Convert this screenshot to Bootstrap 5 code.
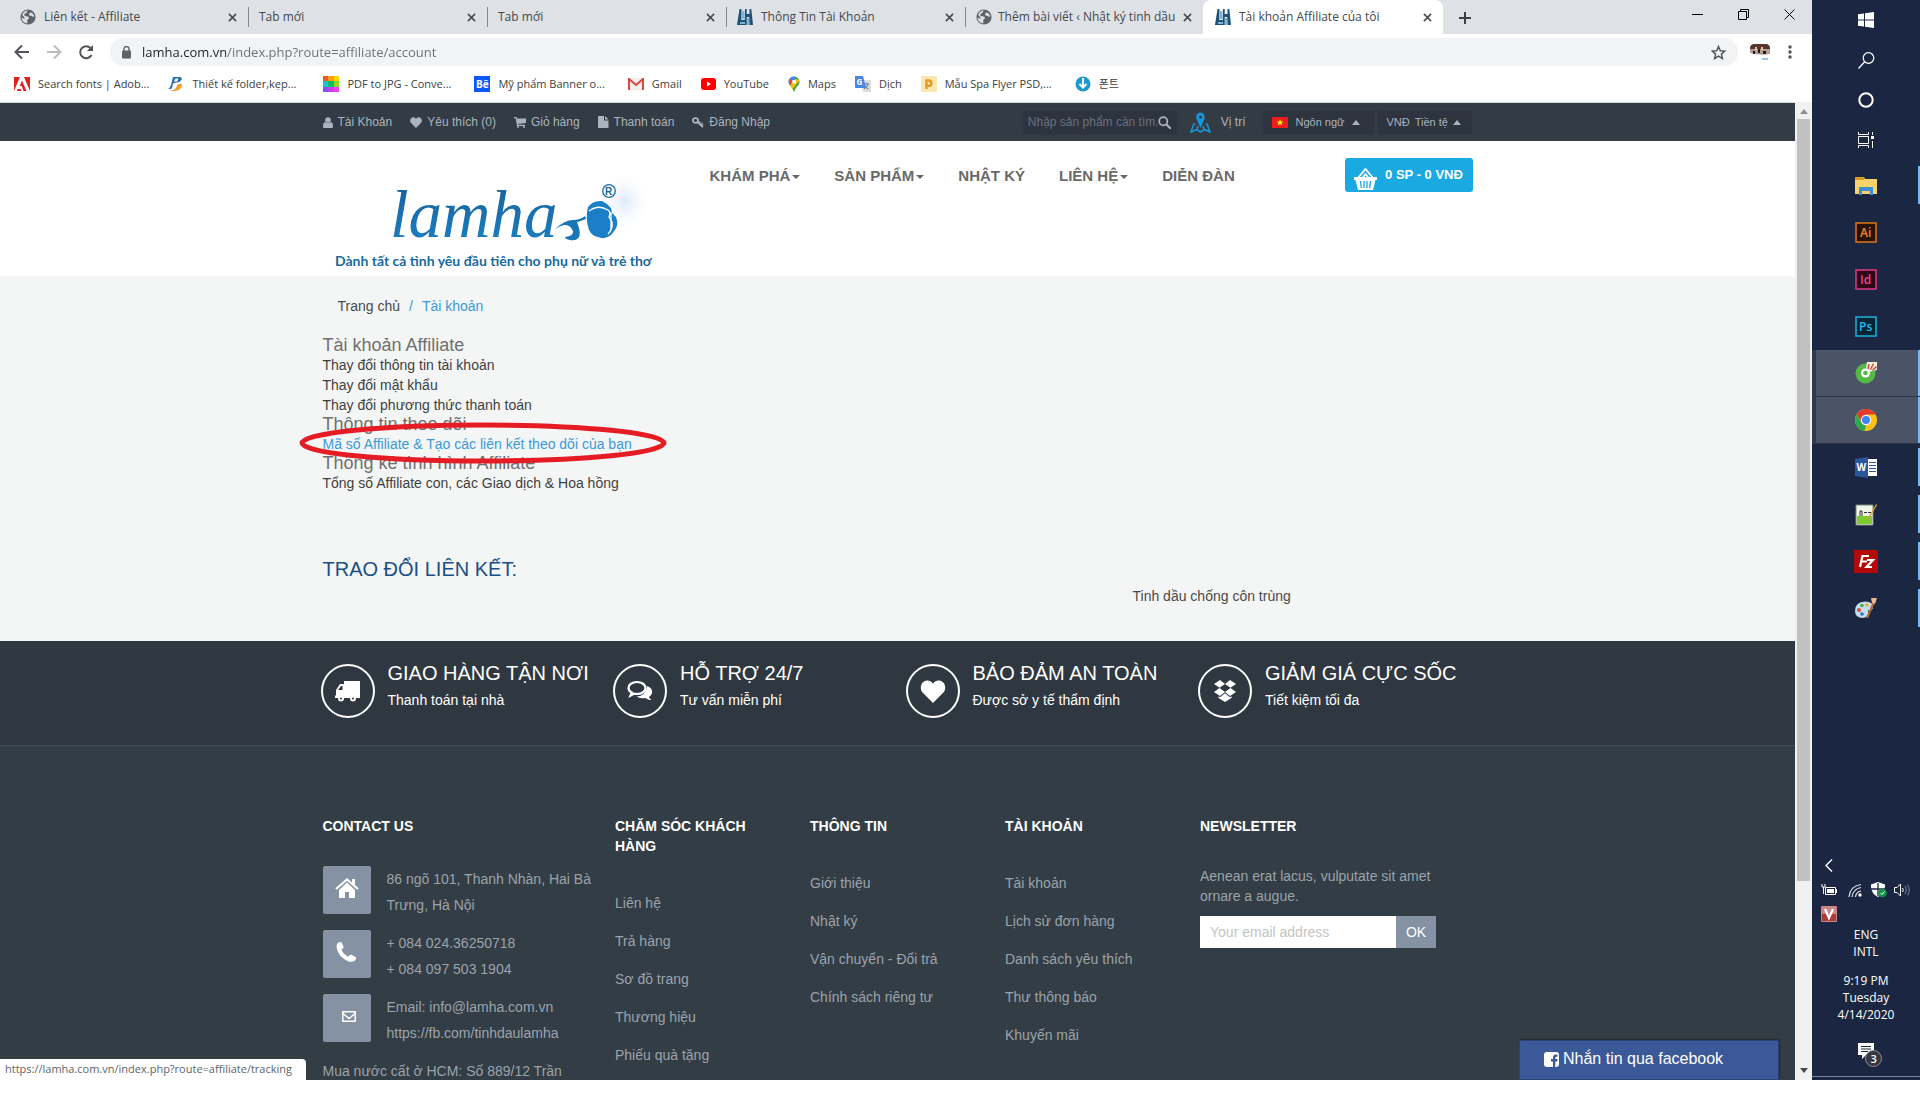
<!DOCTYPE html>
<html lang="vi">
<head>
<meta charset="utf-8">
<meta name="viewport" content="width=device-width, initial-scale=1">
<title>Tài khoản Affiliate của tôi</title>
<link href="https://cdn.jsdelivr.net/npm/bootstrap@5.3.0/dist/css/bootstrap.min.css" rel="stylesheet">
<style>
body{background:#fff;height:100vh;overflow:hidden;padding-bottom:20px;font-family:"Liberation Sans",Arial,sans-serif;font-size:14px;line-height:20px;color:#4a4a4a}
a{text-decoration:none;color:inherit}
button{font-family:inherit}
svg{display:block;flex:none}
.chrome-ui,.win-bar{font-family:"Open Sans","Noto Sans","Noto Sans CJK KR",sans-serif;font-size:12px;line-height:16px}
.plain-btn{background:none;border:0;padding:0;color:inherit;display:flex;align-items:center;justify-content:center}

/* browser tabs */
.tab-strip{background:#dee1e6;height:34px;color:#45494d}
.b-tab{width:239px;height:34px;padding:0 11px 0 10px;gap:8px;position:relative}
.b-tab .tab-label{flex:1;white-space:nowrap}
.b-tab.sep{border-right:1px solid #85898e;height:20px;margin:7px 0}
.b-tab.first{width:249px;padding-left:20px}
.b-tab.last-sep{width:237px;gap:6px;border:0}
.b-tab.live{width:240px;background:#fff;border-radius:8px 8px 0 0;padding:0 11px 0 12px}
.tab-strip .new-tab{width:44px;height:28px}
.win-btn{width:46px;height:28px;color:#000}
.tool-row{height:28px;margin-top:4px;padding:0 14px}
.omni{background:#f1f3f4;border-radius:14px;height:28px;padding:0 12px 0 12px}
.omni input{border:0;outline:0;padding:0;font-size:13px;line-height:24px;height:28px;margin-left:11px;flex:1;color:transparent;background:linear-gradient(90deg,#202124 84px,#6b7075 84px);-webkit-background-clip:text;background-clip:text}
.mark-row{height:36px;padding-left:14px;gap:19px;color:#3c4043;white-space:nowrap;font-size:11px}
.mark-row a{display:flex;align-items:center;gap:8px}

/* site */
.site{border-top:1px solid #d5d8db;background:#f4f5f5}
.wrap{width:100%;max-width:1180px;margin:0 auto;padding:0 15px}
.top-line{background:#333c44;color:#abb3be;font-size:12px;line-height:16px;height:38px}
.top-links{gap:18px}
.top-links a{display:flex;align-items:center;gap:5px}
.dark-box{background:#2d3440;border:1px solid #323945;border-radius:3px;height:25px;color:#abb3be;font-size:11px}
.find-box{width:156px;padding:0 7px 0 5px}
.find-box input{background:none;border:0;outline:0;padding:0;width:130px;height:23px;font-size:12px;color:#abb3be}
.find-box input::placeholder{color:#69707b;opacity:1}
.up-caret{border:4px solid transparent;border-top:0;border-bottom:5px solid #abb3be}
.down-caret{display:inline-block;border:4px solid transparent;border-bottom:0;border-top-color:#696969;margin-left:2px;vertical-align:middle}
.site-head{background:#fff;height:135px}
.logo-box{width:370px}
.main-nav{padding-top:25px;font-size:15px;font-weight:700;color:#696969}
.main-nav a{padding:0 17px}
.cart-btn{background:#1ba9e1;color:#fff;border:0;border-radius:3px;height:34px;width:128px;margin-top:17px;font-size:13px;font-weight:700;gap:8px}
.crumbs{padding:20px 15px 20px;gap:9px}
.hot{color:#3a9ad9}
.acct h2{font-size:18px;line-height:19px;font-weight:400;color:#707070;margin:0}
.acct ul{margin:0;padding:0;list-style:none;color:#3f3f3f}
.ring-host{position:relative;display:inline-block}
.ring{position:absolute;left:-24px;top:-12px;z-index:2;pointer-events:none}
.swap{margin-top:65px;font-size:20px;line-height:22px;color:#1c4f86;margin-bottom:6px}
.ticker{padding-left:810px;padding-bottom:35px}
.features{background:#2f3840;border-bottom:1px solid #434d54;color:#fff;height:105px}
.bleed{margin:0 -5px 0 -15px}
.features .bleed{padding-top:22px}
.features .col-3{padding:0 0 0 13px;display:flex;gap:13px}
.disc{width:54px;height:54px;border:2px solid #fff;border-radius:50%;display:flex;align-items:center;justify-content:center;flex:none;margin-top:1px}
.features h3{font-size:20px;line-height:20px;font-weight:400;margin:0 0 9px}
.features p{margin:0;line-height:16px}
.foot{background:#333d45;color:#9ba3ab;padding-top:70px}
.foot h4{font-size:14px;line-height:20px;font-weight:700;color:#fff;margin:0}
.foot .bleed>div{padding:0 15px}
.foot ul{list-style:none;margin:28px 0 0;padding:0}
.foot li{line-height:20px;padding:9px 0}
.foot-text{margin:30px 0 10px}
.contacts{margin-top:30px;white-space:nowrap}
.contact-row{display:flex;gap:16px;margin-bottom:12px;line-height:26px;height:52px}
.addr-line{line-height:26px}
.tile{width:48px;height:48px;border-radius:2px;background:#8492a4;display:flex;align-items:center;justify-content:center;flex:none}
.mail-in{width:196px;height:32px;border:0;border-radius:0;padding:0 10px;font-size:14px;background:#fff}
.mail-in::placeholder{color:#c4c4c4;opacity:1}
.mail-ok{width:40px;height:32px;border:0;background:#8492a4;color:#fff;font-size:14px}
.status-tip{position:absolute;left:0;bottom:0;background:#fff;border-radius:0 4px 0 0;height:21px;padding:2px 14px 0 5px;color:#606468}
.status-tip.chrome-ui{font-size:11px}
.fb-chat{position:absolute;right:16px;bottom:0;width:260px;height:40px;background:#3b5998;border:1px solid #2d4373;border-radius:2px 2px 0 0;box-shadow:1px -1px 2px #0005;color:#fff;font-size:16px;padding:0 0 2px 24px;gap:4px}
.scroll{width:17px;background:#f1f1f1;padding:7px 2px 7px}
.scroll .thumb{background:#c1c1c1;flex:0 0 79%;width:13px;margin-top:5px}
.scroll .thumb+svg{margin-top:auto}

/* taskbar */
.win-bar{width:108px;background:#1b2742;color:#fff;flex:none}
.sys-btn{height:40px;flex:none}
.apps{margin-top:2px;flex:none}
.apps button{height:47px;width:108px;position:relative}
.apps button.run::after{content:"";position:absolute;right:0;top:4px;bottom:5px;width:2px;background:#76b9ed}
.apps button.on{background:#4b5466;border-left:4px solid #2f3a50;border-bottom:1px solid #2a354c;padding-right:4px}
.apps button.on::after{top:0;bottom:0}
.clock{text-align:center;line-height:17px}
.tray{gap:7px;padding-left:9px;height:20px}
.note-line{border-top:1px solid #7b849a;height:4px}
</style>
</head>
<body>
<svg width="0" height="0" class="position-absolute">
<defs>
<symbol id="globe" viewBox="0 0 16 16"><circle cx="8" cy="8" r="7.6" fill="#5f6368"/><path d="M8 1.6c-1.400 1-.6 2.200-2.600 2.800S4 7 6.200 7.200s3 .6 2.600 2-2 1.200-1.600 2.800l.2 2.200C4 14.200 1.500 11.500 1.500 8.200l3 2-.2-2L2.200 6C3 3.200 5.200 1.600 8 1.600zM10.200 3.200c2 .6 3.600 2.200 4.100 4.400-1.300.6-2-.4-3-.8s-2.300-.2-2.300-1.600 1.600-.8 1.200-2z" fill="#dee1e6"/></symbol>
<symbol id="lh" viewBox="0 0 16 16"><path d="M2.500 0h2L4.300 11h3.500L8 0h1.700v5h2.800V0h1.800L16 16h-3.500l-.3-8H9.700v8H0z" fill="#1f5076"/><path d="M5 2h2.500v8H5zM10 9h2v7h-2zM3 13h5v2H3z" fill="#7eb4d8"/></symbol>
<symbol id="cross" viewBox="0 0 10 10"><path d="M1 1l8 8M9 1L1 9" stroke="currentColor" stroke-width="1.700" fill="none"/></symbol>
<symbol id="heart" viewBox="0 0 16 15"><path d="M8 15L1.200 8.200C-.6 6.200-.2 2.800 1.700 1.300 3.800-.3 6.600.3 8 2.500c1.400-2.200 4.200-2.800 6.300-1.200 1.900 1.500 2.300 4.900.5 6.900z" fill="currentColor"/></symbol>
<symbol id="mag" viewBox="0 0 16 16"><circle cx="6.500" cy="6.500" r="5" stroke="currentColor" stroke-width="2.200" fill="none"/><path d="M10.500 10.500L15 15" stroke="currentColor" stroke-width="2.600" stroke-linecap="round"/></symbol>
</defs>
</svg>
<div class="d-flex h-100">
<div class="flex-grow-1 d-flex flex-column" style="min-width:0">

<header class="chrome-ui">
<div class="tab-strip d-flex">
<div class="b-tab sep first d-flex align-items-center"><svg width="16" height="16"><use href="#globe"/></svg><span class="tab-label">Liên kết - Affiliate</span><button class="plain-btn" aria-label="Đóng"><svg width="9" height="9"><use href="#cross"/></svg></button></div>
<div class="b-tab sep d-flex align-items-center"><span class="tab-label">Tab mới</span><button class="plain-btn" aria-label="Đóng"><svg width="9" height="9"><use href="#cross"/></svg></button></div>
<div class="b-tab sep d-flex align-items-center"><span class="tab-label">Tab mới</span><button class="plain-btn" aria-label="Đóng"><svg width="9" height="9"><use href="#cross"/></svg></button></div>
<div class="b-tab sep d-flex align-items-center"><svg width="16" height="16"><use href="#lh"/></svg><span class="tab-label">Thông Tin Tài Khoản</span><button class="plain-btn" aria-label="Đóng"><svg width="9" height="9"><use href="#cross"/></svg></button></div>
<div class="b-tab sep last-sep d-flex align-items-center"><svg width="16" height="16"><use href="#globe"/></svg><span class="tab-label">Thêm bài viết ‹ Nhật ký tinh dầu</span><button class="plain-btn" aria-label="Đóng"><svg width="9" height="9"><use href="#cross"/></svg></button></div>
<div class="b-tab live d-flex align-items-center"><svg width="16" height="16"><use href="#lh"/></svg><span class="tab-label">Tài khoản Affiliate của tôi</span><button class="plain-btn" aria-label="Đóng"><svg width="9" height="9"><use href="#cross"/></svg></button></div>
<button class="plain-btn new-tab mt-1" aria-label="Thẻ mới"><svg width="12" height="12" viewBox="0 0 12 12"><path d="M6 0v12M0 6h12" stroke="#3c4043" stroke-width="2"/></svg></button>
<div class="ms-auto d-flex">
<button class="plain-btn win-btn" aria-label="Thu nhỏ"><svg width="11" height="11"><path d="M0 5.500h11" stroke="#000"/></svg></button>
<button class="plain-btn win-btn" aria-label="Khôi phục"><svg width="11" height="11"><path d="M.5 2.500h8v8h-8zM2.500 2.500v-2h8v8h-2" stroke="#000" fill="none"/></svg></button>
<button class="plain-btn win-btn" aria-label="Đóng cửa sổ"><svg width="11" height="11"><path d="M.5.5l10 10M10.500.5l-10 10" stroke="#000" fill="none"/></svg></button>
</div>
</div>
<div class="tool-row d-flex align-items-center">
<button class="plain-btn" aria-label="Quay lại"><svg width="16" height="16" viewBox="0 0 16 16"><path d="M15 8H2M8 1.500L1.500 8 8 14.500" stroke="#505357" stroke-width="2" fill="none"/></svg></button>
<button class="plain-btn ms-3" aria-label="Tiến"><svg width="16" height="16" viewBox="0 0 16 16"><path d="M1 8h13M8 1.500L14.500 8 8 14.500" stroke="#babcbe" stroke-width="2" fill="none"/></svg></button>
<button class="plain-btn ms-3 me-3" aria-label="Tải lại"><svg width="16" height="16" viewBox="0 0 16 16"><path d="M13.500 11A6 6 0 1 1 12.500 4" stroke="#505357" stroke-width="2" fill="none"/><path d="M15 1v6H9z" fill="#505357"/></svg></button>
<div class="omni d-flex align-items-center flex-grow-1 me-2">
<svg width="9" height="13" viewBox="0 0 9 13"><rect y="4.500" width="9" height="8" rx="1" fill="#5f6368"/><path d="M2 5V3a2.500 2.500 0 0 1 5 0v2" stroke="#5f6368" stroke-width="1.400" fill="none"/></svg>
<label class="visually-hidden" for="url">Địa chỉ</label><input id="url" value="lamha.com.vn/index.php?route=affiliate/account">
<button class="plain-btn" aria-label="Đánh dấu trang"><svg width="15" height="15" viewBox="0 0 16 16"><path d="M8 1.500l1.900 4.600 4.900.4-3.700 3.200 1.100 4.800L8 11.900l-4.200 2.600 1.100-4.800L1.200 6.500l4.900-.4z" stroke="#505357" stroke-width="1.500" fill="none"/></svg></button>
</div>
<button class="plain-btn ms-1" aria-label="Hồ sơ"><svg width="20" height="20" viewBox="0 0 20 20"><path d="M0 11V6q0-4 5-4h10q5 0 5 4v6q-10 2-20-1z" fill="#b39c92"/><path d="M0 7q0-5 5-5h10q5 0 5 5z" fill="#54362e"/><path d="M3 9h2v3H3zM8 7h2v4H8zM13 9h3v3h-3z" fill="#241a1a"/><path d="M5 5h2v3H5zM11 5h2v3h-2z" fill="#e8c3b0"/><path d="M12 16.500h6v1h-6z" fill="#2e8fe0"/></svg></button>
<button class="plain-btn ms-3 me-1" aria-label="Menu"><svg width="8" height="14"><g fill="#505357"><circle cx="4" cy="2" r="1.700"/><circle cx="4" cy="7" r="1.700"/><circle cx="4" cy="12" r="1.700"/></g></svg></button>
</div>
<nav class="mark-row d-flex align-items-center">
<a href="#"><svg width="16" height="14"><path d="M0 0h16v14H0z" fill="#d9241f"/><path d="M6 0h4l6 14h-3.500L8 3.500 5.800 9h2l1.700 5H7.600l-1-2H3.700L3 14H0z" fill="#fff"/></svg>Search fonts | Adob...</a>
<a href="#"><svg width="16" height="16" viewBox="0 0 16 16"><path d="M5 1h7c3 0 2 4-1 5-2 1-5 0-6 2-1 2 0 4-2 5H0q2-1 3-4z" fill="#2a6fb5"/><path d="M7.500 2.500h3l-1.500 3h-3z" fill="#fff"/><path d="M1 15q8-1 8-6 3-2 5-1 0 7-8 7z" fill="#f2a02b"/></svg>Thiết kế folder,kẹp...</a>
<a href="#" class="ms-2"><svg width="16" height="16"><path d="M0 0h6v5H0z" fill="#f1592a"/><path d="M5 0h6v5H5z" fill="#fb9f1a"/><path d="M11 0h5v5h-5z" fill="#ffd400"/><path d="M0 5h5v6H0z" fill="#18c6d8"/><path d="M5 5h6v6H5z" fill="#10ba60"/><path d="M11 5h5v6h-5z" fill="#8bdc20"/><path d="M0 11h5v5H0z" fill="#7a55f5"/><path d="M5 11h6v5H5z" fill="#c83df0"/><path d="M11 11h5v5h-5z" fill="#ef3df0"/></svg>PDF to JPG - Conve...</a>
<a href="#" class="ms-1"><svg width="16" height="16"><path d="M0 0h16v16H0z" fill="#0a58ff"/><text x="2" y="12" font-size="10" font-weight="700" fill="#fff">Bē</text></svg>Mỹ phẩm Banner o...</a>
<a href="#" class="ms-1"><svg width="16" height="12"><path d="M0 0h16v12H0z" fill="#f2eeee"/><path d="M1 12V1l7 6 7-6v11" stroke="#d5483c" stroke-width="2" fill="none"/></svg>Gmail</a>
<a href="#"><svg width="15" height="12"><rect width="15" height="12" rx="3" fill="#f00"/><path d="M6 3.500v5L10 6z" fill="#fff"/></svg>YouTube</a>
<a href="#"><svg width="12" height="16" viewBox="0 0 12 16"><path d="M6 16C5 11 1 10 .6 6A5.400 5.400 0 0 1 6 .5 5.400 5.400 0 0 1 11.400 6C11 10 7 11 6 16z" fill="#34a853"/><path d="M.6 6A5.400 5.400 0 0 1 6 .5L8 1 2 9Q.8 7.500.6 6z" fill="#4285f4"/><path d="M2 3L.7 6 2 9l3-4z" fill="#ea4335"/><path d="M2 9.200l6-6.500 3 1.600Q12 8 8.500 11l-3.500 3z" fill="#fbbc04"/><path d="M11.400 6Q11 9 8.500 11 6.500 13 6 16q-.5-2-1.200-3.200L11 5z" fill="#34a853"/><circle cx="6" cy="5.800" r="2" fill="#fff"/></svg>Maps</a>
<a href="#"><svg width="16" height="16"><path d="M5 4h11v12H8z" fill="#dadce0"/><path d="M8 8h6M11 7v1M13 8q-1 4-4 5M9.500 9q1 3 4 4" stroke="#617d8b" fill="none"/><path d="M0 0h8l3 12H1q-1 0-1-1z" fill="#4a86e8"/><text x="1.500" y="9" font-size="8" font-weight="700" fill="#fff">G</text></svg>Dịch</a>
<a href="#"><svg width="16" height="16"><path d="M0 0h16v16H0z" fill="#fbe7b0"/><path d="M5.500 13V4.500h2.200a2.700 2.700 0 0 1 0 5.400H6" stroke="#ef9420" stroke-width="2.400" fill="none"/></svg>Mẫu Spa Flyer PSD,...</a>
<a href="#" class="ms-1"><svg width="16" height="16"><circle cx="8" cy="8" r="7.500" fill="#1a9ad0"/><path d="M8 2v9M4.500 8L8 11.500 11.500 8" stroke="#fff" stroke-width="2" fill="none"/></svg>폰트</a>
</nav>
</header>

<div class="d-flex flex-grow-1 position-relative overflow-hidden" style="min-height:0">
<main class="site flex-grow-1 overflow-hidden position-relative">
<div class="top-line">
<div class="wrap d-flex align-items-center h-100">
<nav class="top-links d-flex">
<a href="#"><svg width="10" height="11" viewBox="0 0 10 11"><circle cx="5" cy="3" r="2.800" fill="currentColor"/><path d="M0 10q0-4.500 2-5 3 2 6 0 2 .5 2 5 0 1-1 1H1q-1 0-1-1z" fill="currentColor"/></svg>Tài Khoản</a>
<a href="#"><svg width="12" height="11"><use href="#heart"/></svg>Yêu thích (0)</a>
<a href="#"><svg width="12" height="11" viewBox="0 0 12 11"><path d="M0 0h2.500L3 1.500h9v4.600L4 7l.1.800H11V9H3L1.700 1.200H0z" fill="currentColor"/><circle cx="4" cy="10" r="1" fill="currentColor"/><circle cx="10" cy="10" r="1" fill="currentColor"/></svg>Giỏ hàng</a>
<a href="#"><svg width="11" height="12" viewBox="0 0 11 12"><path d="M0 0h6v4.500h4.500V12H0zM7 0l3.500 3.500H7z" fill="currentColor"/></svg>Thanh toán</a>
<a href="#"><svg width="12" height="11" viewBox="0 0 12 11"><ellipse cx="3.500" cy="3.500" rx="2.600" ry="2.300" stroke="currentColor" stroke-width="1.800" fill="none"/><path d="M5.500 5l5.500 5M9 8l1.800-1.500M7 6.500L8.500 5" stroke="currentColor" stroke-width="1.800"/></svg>Đăng Nhập</a>
</nav>
<form class="dark-box find-box d-flex align-items-center ms-auto"><label class="visually-hidden" for="q">Tìm</label><input id="q" placeholder="Nhập sản phẩm cần tìm."><button type="button" class="plain-btn" aria-label="Tìm"><svg width="13" height="13"><use href="#mag"/></svg></button></form>
<a href="#" class="d-flex align-items-center ms-2 ps-1 me-3" style="gap:10px"><svg width="21" height="21" viewBox="0 0 21 21"><path d="M5.500 12H3.800L1 20l6-2.500 3.500 2.500 4-2.500L20 20l-3-8h-1.500M7 17l1-3M14 17l-1-3" stroke="#1a94d8" stroke-width="1.600" fill="none"/><path d="M10.500 16L7 8Q4.800 3 8.500 1q4.500-1.500 6 2.500.4 2-.4 4.500z" fill="#1a94d8"/><circle cx="10.500" cy="5" r="1.600" fill="#333c44"/></svg>Vị trí</a>
<button class="dark-box d-flex align-items-center" style="width:113px;padding:0 9px;gap:8px"><svg width="16" height="11"><path d="M0 0h16v11H0z" fill="#ee1c1c"/><path d="M8 2l.9 2.500h2.600L9.400 6l.8 2.600L8 7 5.800 8.600 6.600 6 4.500 4.500h2.600z" fill="#ff0"/></svg>Ngôn ngữ<span class="up-caret"></span></button>
<button class="dark-box d-flex align-items-center" style="width:96px;padding:0 9px;gap:5px;margin-left:2px">VNĐ <span>Tiền tệ</span><span class="up-caret"></span></button>
</div>
</div>

<div class="site-head">
<div class="wrap d-flex align-items-start">
<a href="#" class="logo-box"><svg width="350" height="134" viewBox="0 0 350 134"><defs><radialGradient id="halo"><stop offset="0" stop-color="#cfdff2"/><stop offset="1" stop-color="#fff" stop-opacity="0"/></radialGradient><linearGradient id="ink" x1="0" y1="0" x2="0" y2="1"><stop offset="0" stop-color="#1a5f93"/><stop offset="1" stop-color="#1a82c8"/></linearGradient></defs>
<ellipse cx="302" cy="60" rx="26" ry="30" fill="url(#halo)" opacity=".7"/>
<text x="67" y="96" font-family="Liberation Serif,serif" font-style="italic" font-size="67" fill="url(#ink)">lamha</text>
<path d="M232 88q10-9 18-9 7 0 12-4l1 3q-5 2-9 3 8 20-7 18-5-1-5-3 9-1 8-6-3-7-9-6-4 1-9 4z" fill="#1a75b4"/>
<path d="M265 66q5-7 14-6 6 3 9 7l1 5 4 4q3 7-1 13l-4 5q-6 5-13 2-6-1-9-7-4-12-1-23z" fill="#1a7fc6"/><path d="M266 70q9-7 19-1 3 2 1 7l3 5q1 7-4 12M288 71v18" stroke="#fff" stroke-width="1.300" fill="none"/>
<circle cx="286" cy="50" r="6.300" stroke="#1a6aa4" stroke-width="1.300" fill="#fff"/><text x="282" y="54" font-family="Liberation Sans,sans-serif" font-size="10" font-weight="700" fill="#1a6aa4">R</text>
<text x="12" y="125" font-family="Lato,sans-serif" font-size="14" font-weight="700" fill="#176a9f">Dành tất cả tình yêu đầu tiên cho phụ nữ và trẻ thơ</text></svg></a>
<nav class="main-nav d-flex">
<a href="#">KHÁM PHÁ<span class="down-caret"></span></a><a href="#">SẢN PHẨM<span class="down-caret"></span></a><a href="#">NHẬT KÝ</a><a href="#">LIÊN HỆ<span class="down-caret"></span></a><a href="#">DIỄN ĐÀN</a>
</nav>
<button class="cart-btn ms-auto d-flex align-items-center justify-content-center p-0"><svg width="23" height="22" viewBox="0 0 23 22" class="mt-2"><path d="M4 10L11.500 1 19 10M8.500 10l3-4 3 4" stroke="#fff" stroke-width="1.800" fill="none"/><path d="M0 9h23v3h-1.500L19 22H4L1.500 12H0z" fill="#fff"/><path d="M6.500 13l.8 7M10 13v7M13 13v7M16.500 13l-.8 7" stroke="#1ba9e1" stroke-width="1.300"/></svg>0 SP - 0 VNĐ</button>
</div>
</div>

<div class="wrap">
<nav class="crumbs d-flex"><a href="#">Trang chủ</a><span class="hot">/</span><a href="#" class="hot">Tài khoản</a></nav>
<section class="acct">
<h2>Tài khoản Affiliate</h2>
<ul><li><a href="#">Thay đổi thông tin tài khoản</a></li><li><a href="#">Thay đổi mật khẩu</a></li><li><a href="#">Thay đổi phương thức thanh toán</a></li></ul>
<h2>Thông tin theo dõi</h2>
<ul><li><span class="ring-host"><a href="#" class="hot">Mã số Affiliate &amp; Tạo các liên kết theo dõi của bạn</a><svg class="ring" width="368" height="43"><ellipse cx="184" cy="21" rx="181" ry="18" fill="none" stroke="#e51c24" stroke-width="5"/></svg></span></li></ul>
<h2>Thống kê tình hình Affiliate</h2>
<ul><li><a href="#">Tổng số Affiliate con, các Giao dịch &amp; Hoa hồng</a></li></ul>
</section>
<h3 class="swap fw-normal">TRAO ĐỔI LIÊN KẾT:</h3>
<div class="ticker"><a href="#">Tinh dầu chống côn trùng</a></div>
</div>

<section class="features">
<div class="wrap"><div class="row g-0 bleed">
<div class="col-3"><span class="disc"><svg width="25" height="21" viewBox="0 0 25 21"><path d="M9 0h16v17H9zM7.500 3h2v14H0v-2l1-1V9l4-6z" fill="#fff"/><path d="M3 9l3-4h1.500v4z" fill="#2f3840"/><circle cx="6" cy="17.500" r="2" fill="#2f3840" stroke="#fff" stroke-width="2"/><circle cx="18" cy="17.500" r="2" fill="#2f3840" stroke="#fff" stroke-width="2"/></svg></span><div><h3>GIAO HÀNG TẬN NƠI</h3><p>Thanh toán tại nhà</p></div></div>
<div class="col-3"><span class="disc"><svg width="26" height="22" viewBox="0 0 26 22"><path d="M20 6q6 2 5 7-.5 2.500-3 4 1 2 2.500 3-3 .5-6-2-6 1-9-1.500Q19 16 20 6z" fill="#fff"/><path d="M10 2c5 0 8.500 2.700 8.500 6s-3.500 6-8.500 6q-1.500 0-3-.3L3.500 15.500 4.800 12.500Q1.500 11 1.500 8C1.500 4.700 5 2 10 2z" stroke="#fff" stroke-width="2.200" fill="#2f3840"/></svg></span><div><h3>HỖ TRỢ 24/7</h3><p>Tư vấn miễn phí</p></div></div>
<div class="col-3"><span class="disc"><svg width="26" height="23"><use href="#heart"/></svg></span><div><h3>BẢO ĐẢM AN TOÀN</h3><p>Được sở y tế thẩm định</p></div></div>
<div class="col-3"><span class="disc"><svg width="24" height="22" viewBox="0 0 24 22"><path d="M7 0l5 4-5.500 3.800L1 4zM17 0l6 4-5.500 3.800L12 4zM6.500 8L12 12l-5 4-6-4zM17.500 8l5.500 4-6 4-5-4zM12 13.200l5 4 1.500-1V18L12 22l-6.500-4v-1.800l1.500 1z" fill="#fff"/></svg></span><div><h3>GIẢM GIÁ CỰC SỐC</h3><p>Tiết kiệm tối đa</p></div></div>
</div></div>
</section>

<footer class="foot">
<div class="wrap"><div class="row g-0 bleed">
<div class="col-3"><h4>CONTACT US</h4>
<div class="contacts">
<div class="contact-row"><span class="tile"><svg width="24" height="20" viewBox="0 0 24 20" class="mb-1"><path d="M12 4.500L20 12v8h-6v-6h-4v6H4v-8z" fill="#fff"/><path d="M1 11L12 1.500 23 11" stroke="#fff" stroke-width="2.200" fill="none"/><path d="M17 1h3v6l-3-2.500z" fill="#fff"/></svg></span><div>86 ngõ 101, Thanh Nhàn, Hai Bà<br>Trưng, Hà Nội</div></div>
<div class="contact-row"><span class="tile"><svg width="21" height="20" viewBox="0 0 16 16" class="mb-1"><path d="M1 .8Q3-.3 4 .2L5.800 4q0 1-1.800 2.200 1.200 3.200 5.200 5.500Q11 9.900 12 10.100l3.700 2Q16 13 15 14.500q-2 2-5.500 1Q1.500 12 .2 5-.2 2 1 .8z" fill="#fff"/></svg></span><div>+ 084 024.36250718<br>+ 084 097 503 1904</div></div>
<div class="contact-row"><span class="tile"><svg width="14" height="11" viewBox="0 0 14 11" class="mb-1 ms-1"><path d="M.8.8h12.400v9.400H.8zM1 2.500l6 5 6-5" stroke="#fff" stroke-width="1.500" fill="none"/></svg></span><div>Email: info@lamha.com.vn<br>https://fb.com/tinhdaulamha</div></div>
<div class="addr-line">Mua nước cất ở HCM: Số 889/12 Trần</div>
</div></div>
<div class="col-2"><h4>CHĂM SÓC KHÁCH HÀNG</h4><ul><li><a href="#">Liên hệ</a></li><li><a href="#">Trả hàng</a></li><li><a href="#">Sơ đồ trang</a></li><li><a href="#">Thương hiệu</a></li><li><a href="#">Phiếu quà tặng</a></li></ul></div>
<div class="col-2"><h4>THÔNG TIN</h4><ul><li><a href="#">Giới thiệu</a></li><li><a href="#">Nhật ký</a></li><li><a href="#">Vận chuyển - Đổi trả</a></li><li><a href="#">Chính sách riêng tư</a></li></ul></div>
<div class="col-2"><h4>TÀI KHOẢN</h4><ul><li><a href="#">Tài khoản</a></li><li><a href="#">Lịch sử đơn hàng</a></li><li><a href="#">Danh sách yêu thích</a></li><li><a href="#">Thư thông báo</a></li><li><a href="#">Khuyến mãi</a></li></ul></div>
<div class="col-3"><h4>NEWSLETTER</h4><p class="foot-text">Aenean erat lacus, vulputate sit amet<br>ornare a augue.</p><form class="d-flex"><label class="visually-hidden" for="em">Email</label><input id="em" type="email" class="mail-in" placeholder="Your email address"><button type="button" class="mail-ok">OK</button></form></div>
</div></div>
</footer>
<button class="fb-chat d-flex align-items-center"><svg width="15" height="15" viewBox="0 0 15 15"><rect width="15" height="15" rx="3" fill="#fff"/><path d="M9 15V9.500H7V7h2V5.200Q9 2.500 12 2.500h1.500v2.300h-1.300q-.9 0-.9.9V7h2.200l-.3 2.500h-1.900V15z" fill="#3b5998"/></svg>Nhắn tin qua facebook</button>
</main>
<div class="scroll d-flex flex-column align-items-center"><svg width="8" height="5"><path d="M0 5l4-5 4 5z" fill="#8f8f8f"/></svg><div class="thumb"></div><svg width="8" height="5"><path d="M0 0h8L4 5z" fill="#4a4a4a"/></svg></div>
<div class="status-tip chrome-ui">https://lamha.com.vn/index.php?route=affiliate/tracking</div>
</div>
</div>

<aside class="win-bar d-flex flex-column">
<button class="plain-btn sys-btn" aria-label="Start"><svg width="16" height="16"><path d="M0 2.300l6-.9v6.100H0zM7 1.200L16 0v7.500H7zM0 8.500h6v6.100l-6-.9zM7 8.500h9V16l-9-1.200z" fill="#fff"/></svg></button>
<button class="plain-btn sys-btn" aria-label="Search"><svg width="17" height="17"><circle cx="10.500" cy="6" r="5.300" stroke="#fff" stroke-width="1.200" fill="none"/><path d="M6.500 10L.5 16.500" stroke="#fff" stroke-width="1.300"/></svg></button>
<button class="plain-btn sys-btn" aria-label="Cortana"><svg width="16" height="16"><circle cx="8" cy="8" r="6.700" stroke="#fff" stroke-width="2" fill="none"/></svg></button>
<button class="plain-btn sys-btn" aria-label="Task view"><svg width="16" height="16"><path d="M.5 4.500h10v7H.5zM.5 0v2.500h10V0M.5 16v-2.500h10V16M14.500 0v3M14.500 9v7" stroke="#fff" fill="none"/><path d="M13 4h3v3h-3z" fill="#fff"/></svg></button>
<div class="apps d-flex flex-column">
<button class="plain-btn run" aria-label="Explorer"><svg width="22" height="18"><path d="M0 0h9l1 2h12v15H0z" fill="#f8d26a"/><path d="M0 0h9v3H0z" fill="#d99b1c"/><path d="M4 10h14v8h-3v-4H7v4H4z" fill="#3d8fd0"/></svg></button>
<button class="plain-btn" aria-label="Illustrator"><svg width="22" height="21"><path d="M1 1h20v19H1z" fill="#2a1105" stroke="#e0751d" stroke-width="1.500"/><text x="5" y="15" font-size="12" font-weight="600" fill="#f08a24">Ai</text></svg></button>
<button class="plain-btn" aria-label="InDesign"><svg width="22" height="21"><path d="M1 1h20v19H1z" fill="#2d0716" stroke="#de3a86" stroke-width="1.500"/><text x="5" y="15" font-size="12" font-weight="600" fill="#ea4492">Id</text></svg></button>
<button class="plain-btn" aria-label="Photoshop"><svg width="22" height="21"><path d="M1 1h20v19H1z" fill="#062433" stroke="#22b1dc" stroke-width="1.500"/><text x="4" y="15" font-size="12" font-weight="600" fill="#22bde8">Ps</text></svg></button>
<button class="plain-btn run on" aria-label="Cốc Cốc"><svg width="22" height="22"><circle cx="10.500" cy="11.500" r="10" fill="#56b947"/><path d="M12 0h10v8L10 11z" fill="#e9f2e4"/><path d="M13 7l1-5M15.500 7.500l3-6M17.500 8.500l4-4" stroke="#e0533a" stroke-width="1.600"/><circle cx="10.500" cy="11" r="4.500" fill="#fff"/><circle cx="10.500" cy="11" r="2.300" fill="#56b947"/></svg></button>
<button class="plain-btn run on" aria-label="Chrome"><svg width="22" height="22"><circle cx="11" cy="11" r="11" fill="#fbc116"/><path d="M1.500 5.500Q5 0 11 0t9.500 5.500H11L6.500 13z" fill="#e33b2e"/><path d="M1.500 5.500L6.500 14l4.500 2.500L9.500 22Q0 20 0 11q0-3 1.500-5.500z" fill="#2da94f"/><circle cx="11" cy="11" r="5.200" fill="#fff"/><circle cx="11" cy="11" r="4.100" fill="#4285f4"/></svg></button>
<button class="plain-btn run" aria-label="Word"><svg width="22" height="21"><path d="M12 2h10v17H12z" fill="#fff"/><path d="M14 5.500h7M14 8.500h7M14 11.500h7M14 14.500h7" stroke="#2b579a"/><path d="M0 2l13-2v21L0 19z" fill="#2b579a"/><text x="1.500" y="14" font-size="10" font-weight="700" fill="#fff">W</text></svg></button>
<button class="plain-btn run" aria-label="Notepad++"><svg width="22" height="23"><path d="M1 2h17v20H1z" fill="#eef5e9" stroke="#7a8a7a"/><path d="M2 13h15v8H2z" fill="#7ecb2d"/><path d="M5 13V8h2v5M9 9.500h3M13 9.500h3" stroke="#333" fill="none"/><path d="M21 1l-8 14-1 2 2-1 8-14z" fill="#d8a23a"/></svg></button>
<button class="plain-btn run" aria-label="FileZilla"><svg width="24" height="23"><path d="M0 0h24v23H0z" fill="#b30909"/><path d="M6 17L8.500 6H15M7 11.500h6M13 10h6l-6.500 7H18" stroke="#fff" stroke-width="2.200" fill="none"/></svg></button>
<button class="plain-btn run" aria-label="Paint"><svg width="24" height="23"><path d="M1 14Q1 5 11 4.500q9 0 8 7-2 2-5 2 1 7-5 7.500-8 0-8-7z" fill="#c3def0"/><circle cx="5" cy="13" r="2" fill="#e04a3a"/><circle cx="8" cy="8.500" r="1.800" fill="#4fae3f"/><circle cx="13" cy="8" r="1.800" fill="#e9b32a"/><circle cx="8" cy="17" r="1.800" fill="#2f6fc0"/><path d="M20 5l-7 16" stroke="#b86a2a" stroke-width="2"/><path d="M17 1h6l-2 6-3-1z" fill="#e8b890"/></svg></button>
</div>
<div class="mt-auto">
<button class="plain-btn" style="margin:0 0 8px 13px" aria-label="Hidden icons"><svg width="8" height="13"><path d="M7 .5l-6 6 6 6" stroke="#fff" stroke-width="1.400" fill="none"/></svg></button>
<div class="tray d-flex align-items-center">
<svg width="16" height="12"><path d="M4.500 3.500h10v7h-10zM15.500 5v4M1 0v3h3V0M2.500 3v7" stroke="#fff" fill="none"/><path d="M6 5h7v4H6z" fill="#fff"/></svg>
<svg width="16" height="14" class="ms-1"><path d="M1 14Q2 3 13 1.500M4 14Q5 6 13 4.500M7.500 14Q8 9 13 8" stroke="#dfe3ea" stroke-width="1.200" fill="none"/><circle cx="12" cy="12" r="1.700" fill="#fff"/></svg>
<svg width="16" height="16"><path d="M7 0l7 2.500q.5 9-7 12.500Q-.5 11.500 0 2.500z" fill="#fff"/><path d="M7 1v13M0 7h14" stroke="#1b2742" stroke-width="1.300"/><circle cx="11.500" cy="11" r="4.300" fill="#10924a"/><path d="M9.500 11l1.500 1.500 2.500-3" stroke="#fff" fill="none"/></svg>
<svg width="17" height="14"><path d="M.5 4.500h2.500L6.500 1v12L3 9.500H.5z" stroke="#fff" fill="none"/><path d="M8.500 5q1.500 2 0 4" stroke="#fff" fill="none"/><path d="M11 3q3 4 0 8M13.500 1.500q3.500 5.500 0 11" stroke="#7d879c" fill="none"/></svg>
</div>
<svg width="16" height="16" style="margin:6px 0 4px 9px"><rect width="16" height="16" rx="1" fill="#c98587"/><path d="M1 8h14v7H1z" fill="#a63a3c"/><path d="M4 3l4 9 4-9" stroke="#fff" stroke-width="2.200" fill="none"/></svg>
<div class="clock">ENG<br>INTL</div>
<div class="clock mt-2 pt-1">9:19 PM<br>Tuesday<br>4/14/2020</div>
<button class="plain-btn mx-auto" style="margin-top:20px;margin-bottom:8px;padding-left:8px" aria-label="Notifications"><svg width="24" height="25"><path d="M0 0h16v12H8l-4 4v-4H0z" fill="#fff"/><path d="M3 3.500h10M3 6h10M3 8.500h7" stroke="#1b2742"/><circle cx="15.500" cy="15.500" r="8" fill="#35373c" stroke="#8a8f98"/><text x="12.500" y="19.500" font-size="11" font-weight="600" fill="#fff">3</text></svg></button>
<div class="note-line"></div>
</div>
</aside>
</div>
<script src="https://cdn.jsdelivr.net/npm/bootstrap@5.3.0/dist/js/bootstrap.bundle.min.js"></script>
</body>
</html>
